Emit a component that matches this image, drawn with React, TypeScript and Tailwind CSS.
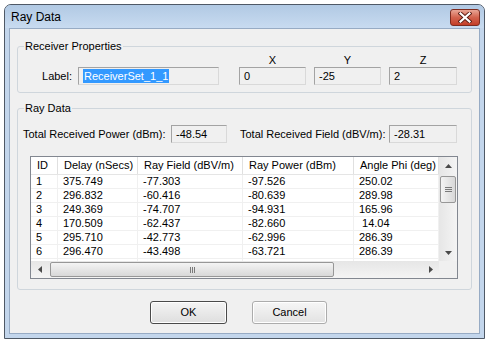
import React from 'react';

const rows = [
  ['1', '375.749', '-77.303', '-97.526', '250.02'],
  ['2', '296.832', '-60.416', '-80.639', '289.98'],
  ['3', '249.369', '-74.707', '-94.931', '165.96'],
  ['4', '170.509', '-62.437', '-82.660', ' 14.04'],
  ['5', '295.710', '-42.773', '-62.996', '286.39'],
  ['6', '296.470', '-43.498', '-63.721', '286.39'],
];

const cols = [
  { name: 'ID', w: 'w-[27px]' },
  { name: 'Delay (nSecs)', w: 'w-[80px]' },
  { name: 'Ray Field (dBV/m)', w: 'w-[105px]' },
  { name: 'Ray Power (dBm)', w: 'w-[111px]' },
  { name: 'Angle Phi (deg)', w: 'flex-1' },
];

function ReadBox({ value, className }: { value: string; className: string }) {
  return (
    <div
      className={`h-[18px] flex items-center pl-[4px] bg-[#f0f0f0] border border-t-[#a3a3a3] border-l-[#a3a3a3] border-r-[#d9d9d9] border-b-[#d9d9d9] leading-[13px] ${className}`}
    >
      {value}
    </div>
  );
}

function Arrow({ dir }: { dir: 'up' | 'down' | 'left' | 'right' }) {
  const pts = {
    up: '0,4 3.5,0 7,4',
    down: '0,0 3.5,4 7,0',
    left: '4,0 0,3.5 4,7',
    right: '0,0 4,3.5 0,7',
  }[dir];
  const vertical = dir === 'up' || dir === 'down';
  return (
    <svg width={vertical ? 7 : 4} height={vertical ? 4 : 7} viewBox={vertical ? '0 0 7 4' : '0 0 4 7'}>
      <polygon points={pts} fill="#4a4a4a" />
    </svg>
  );
}

export default function App() {
  return (
    <div
      className="w-[489px] h-[343px] bg-white pt-[4px] pl-[4px] text-[11px] text-black"
      style={{ fontFamily: '"Liberation Sans", Arial, sans-serif' }}
    >
      <div className="w-[481px] h-[335px] rounded-t-[7px] border border-[#4f5966] bg-[#c3d6ec] flex flex-col overflow-hidden">
        {/* Title bar */}
        <div className="h-[23px] flex items-start bg-gradient-to-b from-[#b1c9e4] to-[#c8dbf0]">
          <div className="pl-[6px] pt-[5px] text-[12px] leading-[14px]">Ray Data</div>
          <div className="ml-auto mt-[4px] mr-[4px] w-[30px] h-[17px] rounded-[3px] border border-[#7d2c20] bg-gradient-to-b from-[#e8a595] via-[#d2624d] to-[#c33d27] flex items-center justify-center">
            <svg width="14" height="11" viewBox="0 0 14 11">
              <path d="M2.5 1.5 L11.5 9.5 M11.5 1.5 L2.5 9.5" stroke="#5a1d14" strokeWidth="4" strokeLinecap="square" />
              <path d="M2.5 1.5 L11.5 9.5 M11.5 1.5 L2.5 9.5" stroke="#ffffff" strokeWidth="2.2" strokeLinecap="square" />
            </svg>
          </div>
        </div>

        {/* Client area */}
        <div className="mx-[4px] flex-1 bg-[#f0f0f0] border border-[#97abc4] flex flex-col">
          {/* Receiver Properties */}
          <fieldset className="mt-[11px] ml-[7px] w-[455px] border border-[#cfd6dc] rounded-[3px] pb-[7px]">
            <legend className="ml-[6px] px-[1px] leading-[13px]">Receiver Properties</legend>
            <div className="flex items-end mt-[1px]">
              <div className="flex items-center">
                <div className="w-[60px] text-right pr-[6px] leading-[13px]">Label:</div>
                <div className="w-[141px] h-[18px] flex items-center pl-[4px] bg-[#f0f0f0] border border-t-[#a3a3a3] border-l-[#a3a3a3] border-r-[#d9d9d9] border-b-[#d9d9d9]">
                  <span className="bg-[#3399ff] text-white leading-[14px] px-[1px]">ReceiverSet_1_1</span>
                </div>
              </div>
              <div className="ml-[20px] flex flex-col w-[67px]">
                <div className="text-center leading-[13px]">X</div>
                <ReadBox value="0" className="w-[67px]" />
              </div>
              <div className="ml-[8px] flex flex-col w-[67px]">
                <div className="text-center leading-[13px]">Y</div>
                <ReadBox value="-25" className="w-[67px]" />
              </div>
              <div className="ml-[8px] flex flex-col w-[68px]">
                <div className="text-center leading-[13px]">Z</div>
                <ReadBox value="2" className="w-[68px]" />
              </div>
            </div>
          </fieldset>

          {/* Ray Data */}
          <fieldset className="mt-[9px] ml-[7px] w-[455px] border border-[#cfd6dc] rounded-[3px] pb-[10px]">
            <legend className="ml-[6px] px-[1px] leading-[13px]">Ray Data</legend>
            <div className="flex items-center mt-[10px]">
              <div className="w-[153px] pl-[5px] leading-[13px]">Total Received Power (dBm):</div>
              <ReadBox value="-48.54" className="w-[56px]" />
              <div className="w-[162px] pl-[13px] leading-[13px]">Total Received Field (dBV/m):</div>
              <ReadBox value="-28.31" className="w-[68px]" />
            </div>

            {/* List view */}
            <div className="mt-[13px] ml-[12px] w-[428px] h-[123px] border border-[#828790] bg-white flex flex-col">
              <div className="flex h-[104px]">
                <div className="flex-1 overflow-hidden flex flex-col">
                  <div className="flex h-[18px] shrink-0 border-b border-[#e5e5e5]">
                    {cols.map((c) => (
                      <div
                        key={c.name}
                        className={`${c.w} shrink-0 pl-[6px] border-r border-[#e0e0e0] flex items-center whitespace-nowrap leading-[13px]`}
                      >
                        {c.name}
                      </div>
                    ))}
                  </div>
                  {rows.map((r) => (
                    <div key={r[0]} className="flex h-[14px] shrink-0 border-b border-[#f0f0f0]">
                      {r.map((v, i) => (
                        <div
                          key={i}
                          className={`${cols[i].w} shrink-0 pl-[5px] border-r border-[#f0f0f0] flex items-center whitespace-pre leading-[13px]`}
                        >
                          {v}
                        </div>
                      ))}
                    </div>
                  ))}
                  <div className="flex flex-1">
                    {cols.map((c) => (
                      <div key={c.name} className={`${c.w} shrink-0 border-r border-[#f0f0f0]`} />
                    ))}
                  </div>
                </div>
                {/* Vertical scrollbar */}
                <div className="w-[18px] flex flex-col bg-gradient-to-r from-[#e6e6e6] to-[#f4f4f4]">
                  <div className="h-[17px] flex items-center justify-center">
                    <Arrow dir="up" />
                  </div>
                  <div className="mt-[2px] mx-[1px] h-[27px] rounded-[2px] border border-[#979797] bg-gradient-to-r from-[#f4f4f4] to-[#d8d8d8] flex flex-col items-center justify-center gap-[1px]">
                    <div className="w-[7px] h-[1px] bg-[#7a7a7a]" />
                    <div className="w-[7px] h-[1px] bg-[#7a7a7a]" />
                    <div className="w-[7px] h-[1px] bg-[#7a7a7a]" />
                  </div>
                  <div className="flex-1" />
                  <div className="h-[17px] flex items-center justify-center">
                    <Arrow dir="down" />
                  </div>
                </div>
              </div>
              {/* Horizontal scrollbar */}
              <div className="flex h-[17px]">
                <div className="flex-1 flex bg-gradient-to-b from-[#e6e6e6] to-[#f4f4f4]">
                  <div className="w-[17px] flex items-center justify-center">
                    <Arrow dir="left" />
                  </div>
                  <div className="ml-[2px] my-[1px] w-[284px] rounded-[2px] border border-[#979797] bg-gradient-to-b from-[#f4f4f4] to-[#d8d8d8] flex items-center justify-center gap-[1px]">
                    <div className="w-[1px] h-[6px] bg-[#7a7a7a]" />
                    <div className="w-[1px] h-[6px] bg-[#7a7a7a]" />
                    <div className="w-[1px] h-[6px] bg-[#7a7a7a]" />
                  </div>
                  <div className="flex-1" />
                  <div className="w-[17px] flex items-center justify-center">
                    <Arrow dir="right" />
                  </div>
                </div>
                <div className="w-[18px] bg-[#f0f0f0]" />
              </div>
            </div>
          </fieldset>

          {/* Buttons */}
          <div className="flex mt-[11px]">
            <button className="ml-[140px] w-[77px] h-[23px] rounded-[3px] border border-[#4a4a4a] bg-gradient-to-b from-[#f4f4f4] to-[#dedede] shadow-[inset_0_0_0_1px_#ffffff] text-[11px] leading-[13px]">
              OK
            </button>
            <button className="ml-[25px] w-[75px] h-[23px] rounded-[3px] border border-[#acacac] bg-gradient-to-b from-[#f6f6f6] to-[#e2e2e2] shadow-[inset_0_0_0_1px_#ffffff] text-[11px] leading-[13px]">
              Cancel
            </button>
          </div>
        </div>
        <div className="h-[4px] shrink-0" />
      </div>
    </div>
  );
}
